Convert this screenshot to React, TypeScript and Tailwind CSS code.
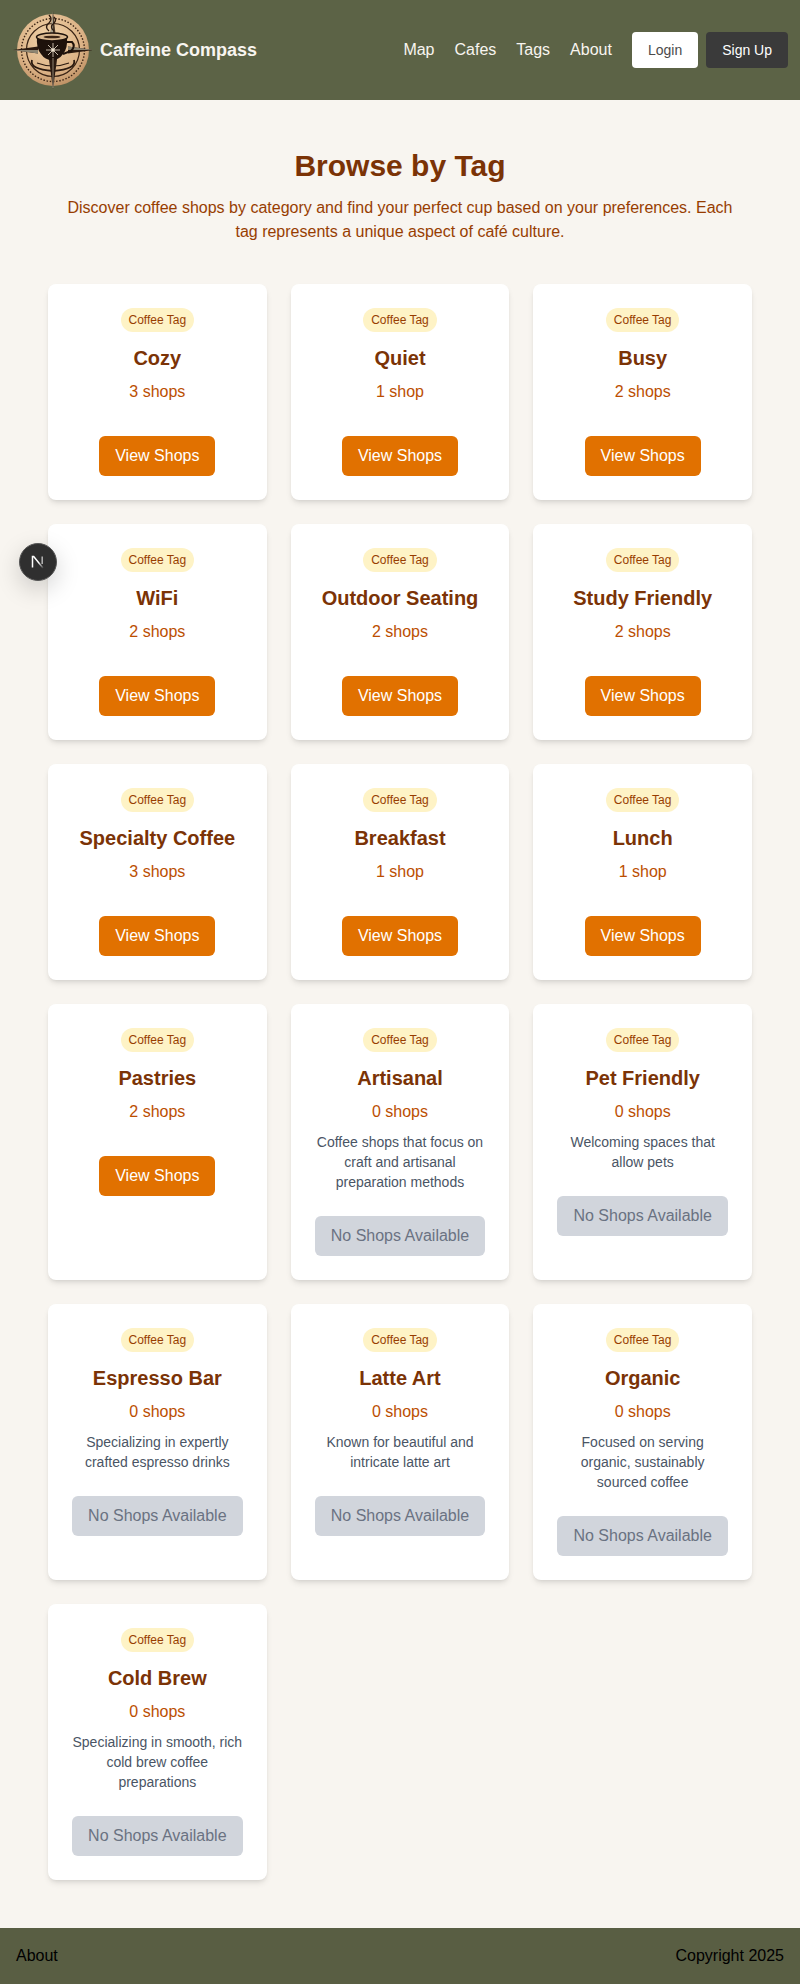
const tags = [
  { name: "Cozy", count: "3 shops" },
  { name: "Quiet", count: "1 shop" },
  { name: "Busy", count: "2 shops" },
  { name: "WiFi", count: "2 shops" },
  { name: "Outdoor Seating", count: "2 shops" },
  { name: "Study Friendly", count: "2 shops" },
  { name: "Specialty Coffee", count: "3 shops" },
  { name: "Breakfast", count: "1 shop" },
  { name: "Lunch", count: "1 shop" },
  { name: "Pastries", count: "2 shops" },
  { name: "Artisanal", count: "0 shops", description: "Coffee shops that focus on craft and artisanal preparation methods" },
  { name: "Pet Friendly", count: "0 shops", description: "Welcoming spaces that allow pets" },
  { name: "Espresso Bar", count: "0 shops", description: "Specializing in expertly crafted espresso drinks" },
  { name: "Latte Art", count: "0 shops", description: "Known for beautiful and intricate latte art" },
  { name: "Organic", count: "0 shops", description: "Focused on serving organic, sustainably sourced coffee" },
  { name: "Cold Brew", count: "0 shops", description: "Specializing in smooth, rich cold brew coffee preparations" },
]

function Logo() {
  return (
    <svg width="80" height="80" viewBox="0 0 80 80" className="shrink-0">
      <defs>
        <radialGradient id="disc" cx="45%" cy="35%" r="70%">
          <stop offset="0%" stopColor="#f2d5ab" />
          <stop offset="65%" stopColor="#dcb387" />
          <stop offset="100%" stopColor="#b98a5e" />
        </radialGradient>
      </defs>
      <circle cx="41" cy="40" r="36" fill="url(#disc)" />
      <circle cx="41" cy="40" r="31.5" fill="none" stroke="#3a2415" strokeWidth="1.4" strokeDasharray="1.5 1.7" />
      <circle cx="41" cy="40" r="26.5" fill="none" stroke="#3a2415" strokeWidth="1.2" />
      <path d="M41 1 L43.5 24 H38.5 Z" fill="#4a3a2a" />
      <path d="M41 1 L41 24 H38.5 Z" fill="#a8a08c" />
      <path d="M41 79 L45.5 46 H36.5 Z" fill="#2b1a10" />
      <path d="M1 40 L26 36.5 V43.5 Z" fill="#2b1a10" />
      <path d="M1 40 H26 V43.5 Z" fill="#8d8572" />
      <path d="M81 40 L56 36.5 V43.5 Z" fill="#2b1a10" />
      <path d="M81 40 H56 V36.5 Z" fill="#8d8572" />
      <path d="M20 50 Q17 59 41 61 Q65 59 62 50" fill="none" stroke="#2b1a10" strokeWidth="1.8" />
      <path d="M25 53 Q41 59 57 53" fill="none" stroke="#2b1a10" strokeWidth="1.2" />
      <path d="M25 27 H55 Q56 38 51 44 Q47 50 40 50 Q33 50 29 44 Q24 38 25 27 Z" fill="#1e120b" />
      <ellipse cx="40" cy="27" rx="15.5" ry="4" fill="#d9b78e" stroke="#1e120b" strokeWidth="1.5" />
      <ellipse cx="40" cy="27" rx="8.5" ry="1.3" fill="#3a2415" />
      <path d="M54 32 H60 Q64 36 59 41 L51 44" fill="none" stroke="#1e120b" strokeWidth="2" />
      <path d="M37 21 Q32 17 37 13 Q41 9 37 5 M42 21 Q37 17 42 13 Q45 10 42 7" fill="none" stroke="#2b1a10" strokeWidth="1.4" />
      <path d="M41 33 V47 M34 40 H48 M36 35 L46 45 M46 35 L36 45" stroke="#efe3cf" strokeWidth="0.8" />
      <circle cx="41" cy="40" r="1.8" fill="#efe3cf" />
      <path d="M41 48 V78" stroke="#a8a08c" strokeWidth="0.8" />
    </svg>
  )
}

function NextBadge() {
  return (
    <div className="fixed left-[19px] top-[543px] flex h-[38px] w-[38px] items-center justify-center rounded-full border border-[#555] bg-[#2f2f2f] shadow-[0_8px_24px_rgba(0,0,0,0.18)]">
      <svg width="18" height="18" viewBox="0 0 18 18" fill="none">
        <defs>
          <linearGradient id="nfade" x1="5" y1="4" x2="14" y2="15" gradientUnits="userSpaceOnUse">
            <stop offset="0.5" stopColor="#fff" />
            <stop offset="1" stopColor="#fff" stopOpacity="0.1" />
          </linearGradient>
        </defs>
        <path d="M3.5 14.5V3.5H4.7L14 15" stroke="url(#nfade)" strokeWidth="1.5" />
        <path d="M13.2 3.5V11" stroke="#fff" strokeOpacity="0.65" strokeWidth="1.5" />
      </svg>
    </div>
  )
}

function TagCard({ name, count, description }: { name: string; count: string; description?: string }) {
  const empty = count === "0 shops"
  return (
    <div className="rounded-lg bg-white p-6 text-center shadow-md">
      <span className="inline-block rounded-full bg-amber-100 px-2 py-1 align-top text-xs text-amber-800">Coffee Tag</span>
      <h2 className="mt-3 mb-2 text-xl font-bold text-amber-900">{name}</h2>
      <p className="pb-2 text-amber-700">{count}</p>
      {description && <p className="text-sm text-gray-600">{description}</p>}
      <div className="mt-6">
        {empty ? (
          <button className="rounded-md bg-gray-300 px-4 py-2 text-gray-500">No Shops Available</button>
        ) : (
          <button className="rounded-md bg-amber-600 px-4 py-2 text-white">View Shops</button>
        )}
      </div>
    </div>
  )
}

export default function App() {
  return (
    <div className="flex min-h-[1984px] flex-col bg-[#f8f5f0] font-['Liberation_Sans',Arial,sans-serif]">
      <header className="flex h-[100px] items-center justify-between bg-[#5c6346] px-3">
        <div className="flex items-center gap-2">
          <Logo />
          <span className="text-lg font-bold text-[#f8f5f0]">Caffeine Compass</span>
        </div>
        <nav className="flex items-center gap-5 text-[#f8f5f0]">
          <a>Map</a>
          <a>Cafes</a>
          <a>Tags</a>
          <a>About</a>
          <div className="flex gap-2 text-sm">
            <button className="rounded bg-white px-4 py-2 text-[#4b4b4b]">Login</button>
            <button className="rounded bg-[#3a3a3a] px-4 py-2 text-white">Sign Up</button>
          </div>
        </nav>
      </header>

      <main className="flex-1 px-12 py-12">
        <div className="mb-10 text-center">
          <h1 className="mb-3 text-3xl font-bold text-amber-900">Browse by Tag</h1>
          <p className="mx-auto max-w-2xl text-amber-800">
            Discover coffee shops by category and find your perfect cup based on your preferences. Each tag represents a unique aspect of café culture.
          </p>
        </div>
        <div className="grid grid-cols-3 gap-6">
          {tags.map((tag) => (
            <TagCard key={tag.name} {...tag} />
          ))}
        </div>
      </main>

      <footer className="flex h-14 items-center justify-between bg-[#595e43] px-4 text-black">
        <span>About</span>
        <span>Copyright 2025</span>
      </footer>

      <NextBadge />
    </div>
  )
}
